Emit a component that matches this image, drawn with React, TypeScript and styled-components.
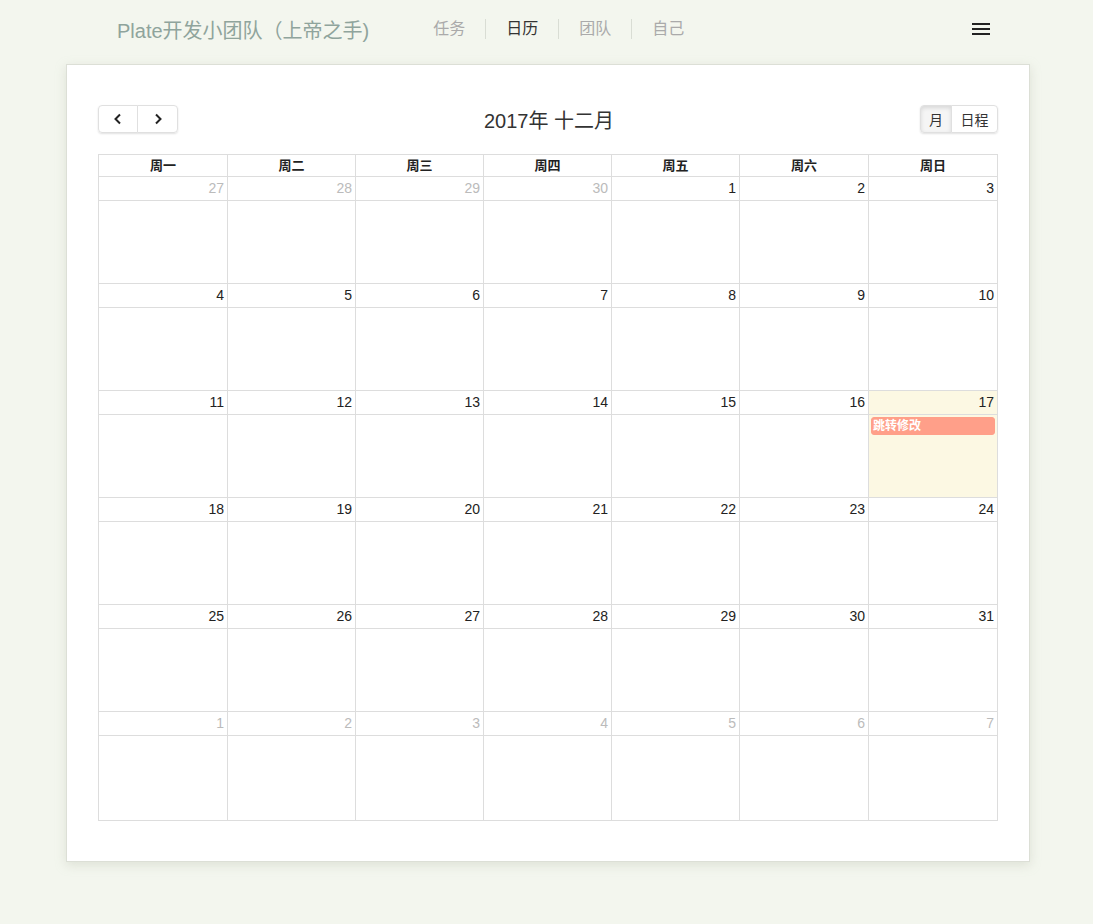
import React from "react";
import styled, { createGlobalStyle } from "styled-components";

const Global = createGlobalStyle`
  html, body { margin: 0; padding: 0; }
  body {
    background: #f3f6ee;
    font-family: "Liberation Sans", Arial, "Noto Sans CJK SC", sans-serif;
    color: #333;
  }
`;

const Page = styled.div`
  min-height: 924px;
  display: flex;
  flex-direction: column;
  align-items: flex-start;
`;

const Header = styled.header`
  width: 100%;
  height: 64px;
  display: flex;
  align-items: center;
  box-sizing: border-box;
  padding: 0 103px 6px 117px;
`;

const Brand = styled.div`
  font-size: 20px;
  color: #8fa49c;
  margin-right: 44px;
  white-space: nowrap;
`;

const Nav = styled.nav`
  display: flex;
  align-items: center;
  flex: 1;
`;

const NavItem = styled.a<{ $active?: boolean }>`
  font-size: 16px;
  padding: 0 20px;
  color: ${(p) => (p.$active ? "#333" : "#aaa")};
  line-height: 20px;
`;

const NavSep = styled.span`
  width: 1px;
  height: 20px;
  background: #d9ddd4;
`;

const Burger = styled.div`
  display: flex;
  flex-direction: column;
  gap: 3px;
  span {
    display: block;
    width: 18px;
    height: 2px;
    background: #222;
  }
`;

const Card = styled.main`
  width: 964px;
  margin-left: 66px;
  box-sizing: border-box;
  background: #fff;
  border: 1px solid #dcdfd6;
  box-shadow: 0 3px 10px rgba(180, 186, 170, 0.35);
  padding: 40px 31px 40px 31px;
`;

const Toolbar = styled.div`
  display: flex;
  align-items: center;
  justify-content: space-between;
  height: 28px;
  margin-bottom: 21px;
`;

const BtnGroup = styled.div`
  display: flex;
  border-radius: 4px;
  box-shadow: 0 1px 2px rgba(0, 0, 0, 0.12);
`;

const Btn = styled.button<{ $w: number; $active?: boolean }>`
  width: ${(p) => p.$w}px;
  height: 28px;
  display: flex;
  align-items: center;
  justify-content: center;
  border: 1px solid #e0e0e0;
  background: ${(p) => (p.$active ? "#f5f5f5" : "#fff")};
  box-shadow: ${(p) => (p.$active ? "inset 0 2px 4px rgba(0,0,0,0.12)" : "none")};
  font-family: inherit;
  font-size: 14px;
  color: #333;
  padding: 0;
  cursor: pointer;
  & + & {
    margin-left: -1px;
  }
  &:first-child {
    border-radius: 4px 0 0 4px;
  }
  &:last-child {
    border-radius: 0 4px 4px 0;
  }
`;

const Title = styled.h2`
  margin: 0;
  font-size: 20px;
  font-weight: normal;
  color: #333;
`;

const Grid = styled.div`
  display: grid;
  grid-template-columns: 129px 128px 128px 128px 128px 129px 129px;
  grid-template-rows: 22px repeat(5, 107px) 109px;
  border-top: 1px solid #ddd;
  border-left: 1px solid #ddd;
`;

const HeadCell = styled.div`
  border-right: 1px solid #ddd;
  border-bottom: 1px solid #ddd;
  font-size: 13px;
  font-weight: bold;
  color: #222;
  display: flex;
  align-items: center;
  justify-content: center;
  padding-bottom: 2px;
  box-sizing: border-box;
`;

const DayCell = styled.div<{ $today?: boolean }>`
  border-right: 1px solid #ddd;
  border-bottom: 1px solid #ddd;
  display: flex;
  flex-direction: column;
  background: ${(p) => (p.$today ? "#fcf8e3" : "#fff")};
  min-width: 0;
`;

const DayNum = styled.div<{ $other?: boolean }>`
  height: 24px;
  border-bottom: 1px solid #ddd;
  font-size: 14px;
  color: ${(p) => (p.$other ? "#bbb" : "#222")};
  text-align: right;
  padding: 3px 3px 0 0;
  box-sizing: border-box;
`;

const DayBody = styled.div`
  flex: 1;
  padding: 2px 2px 0 2px;
`;

const Event = styled.div`
  background: #ff9f89;
  border: 1px solid #ff9f89;
  border-radius: 3px;
  color: #fff;
  font-size: 12px;
  font-weight: bold;
  line-height: 16px;
  padding: 0 1px;
`;

const Chevron = ({ dir }: { dir: "l" | "r" }) => (
  <svg width="10" height="12" viewBox="0 0 10 12">
    <polyline
      points={dir === "l" ? "7,1.5 2.5,6 7,10.5" : "3,1.5 7.5,6 3,10.5"}
      fill="none"
      stroke="#222"
      strokeWidth="2"
    />
  </svg>
);

const heads = ["周一", "周二", "周三", "周四", "周五", "周六", "周日"];

type Day = { n: number; other?: boolean };
const days: Day[] = [];
[27, 28, 29, 30].forEach((n) => days.push({ n, other: true }));
for (let i = 1; i <= 31; i++) days.push({ n: i });
for (let i = 1; i <= 7; i++) days.push({ n: i, other: true });

export default function App() {
  return (
    <Page>
      <Global />
      <Header>
        <Brand>Plate开发小团队（上帝之手)</Brand>
        <Nav>
          <NavItem>任务</NavItem>
          <NavSep />
          <NavItem $active>日历</NavItem>
          <NavSep />
          <NavItem>团队</NavItem>
          <NavSep />
          <NavItem>自己</NavItem>
        </Nav>
        <Burger>
          <span />
          <span />
          <span />
        </Burger>
      </Header>
      <Card>
        <Toolbar>
          <BtnGroup>
            <Btn $w={40}>
              <Chevron dir="l" />
            </Btn>
            <Btn $w={41}>
              <Chevron dir="r" />
            </Btn>
          </BtnGroup>
          <Title>2017年 十二月</Title>
          <BtnGroup>
            <Btn $w={32} $active>
              月
            </Btn>
            <Btn $w={47}>日程</Btn>
          </BtnGroup>
        </Toolbar>
        <Grid>
          {heads.map((h) => (
            <HeadCell key={h}>{h}</HeadCell>
          ))}
          {days.map((d, i) => {
            const today = !d.other && d.n === 17;
            return (
              <DayCell key={i} $today={today}>
                <DayNum $other={d.other}>{d.n}</DayNum>
                <DayBody>{today && <Event>跳转修改</Event>}</DayBody>
              </DayCell>
            );
          })}
        </Grid>
      </Card>
    </Page>
  );
}
